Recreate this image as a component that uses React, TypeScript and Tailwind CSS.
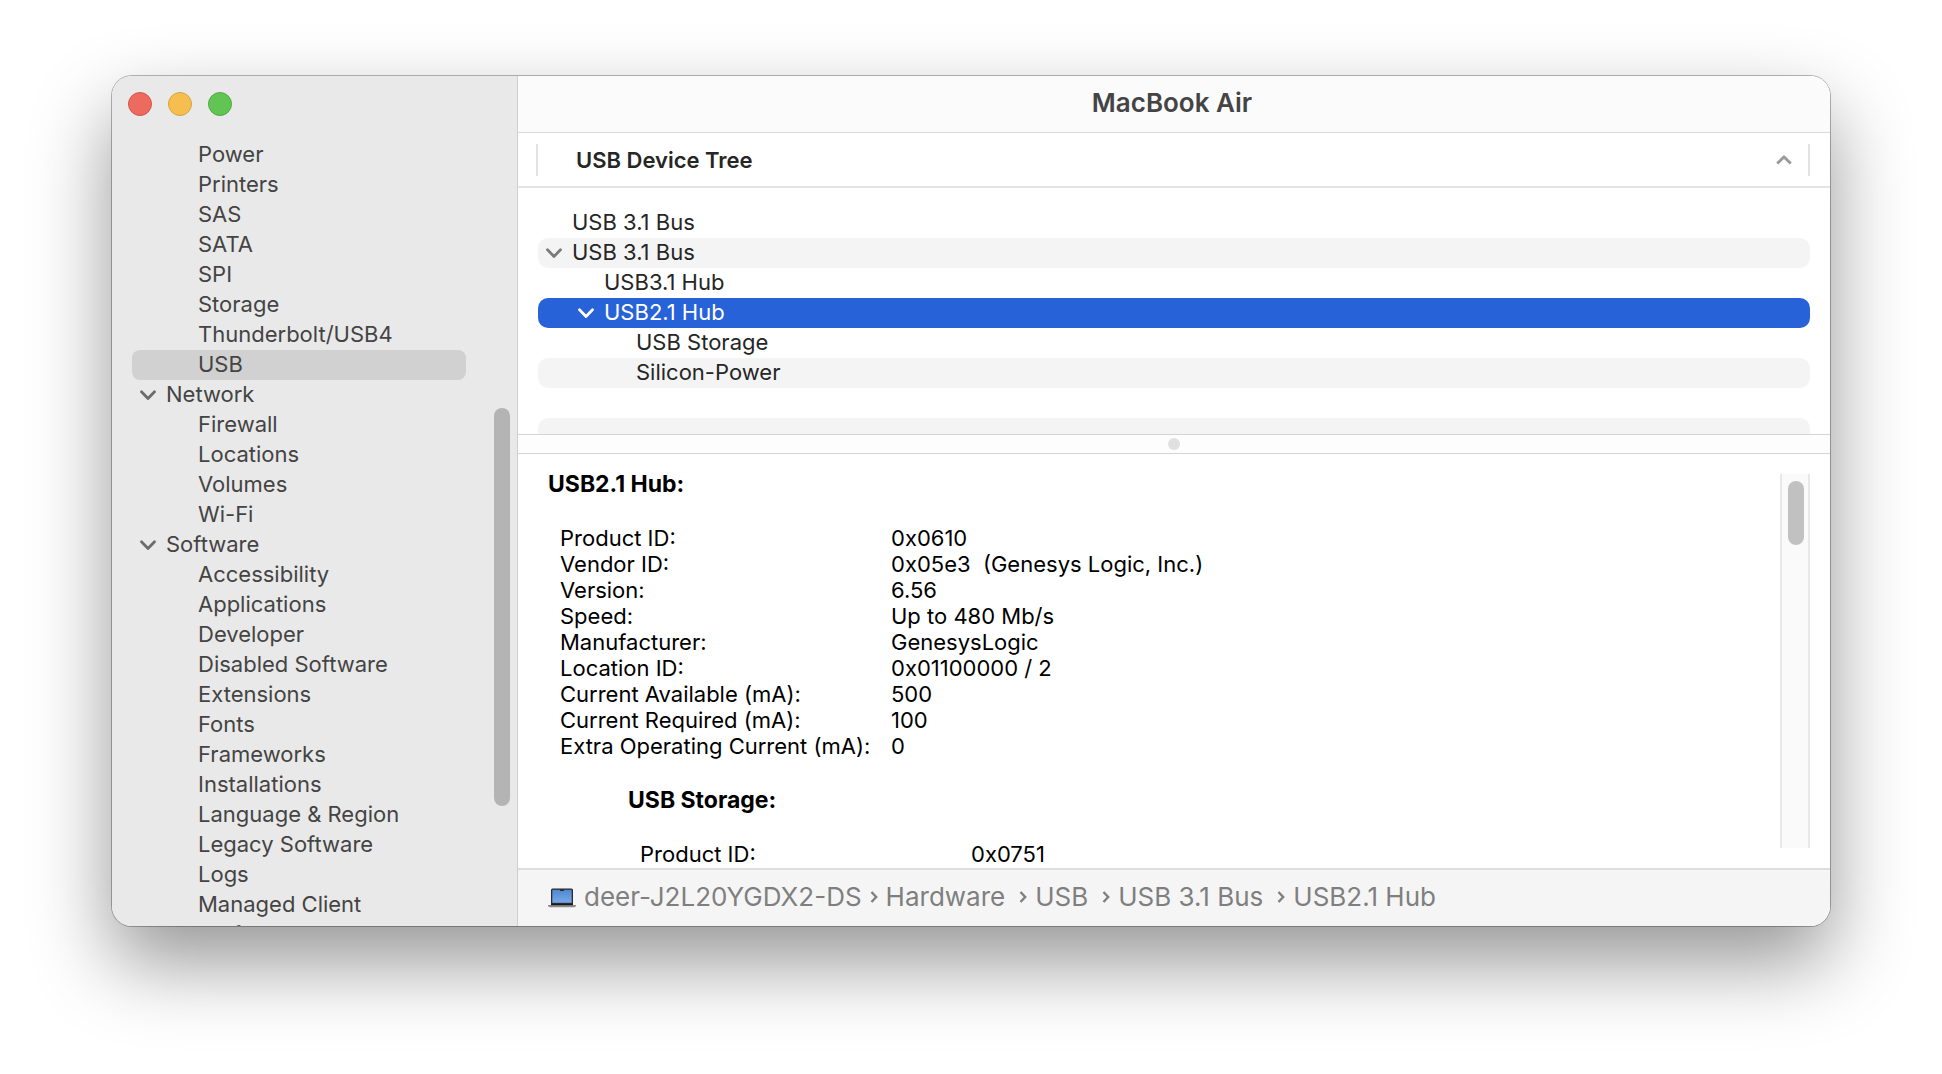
import React from 'react';

type Section = { name?: string; items: string[] };

const sections: Section[] = [
  {
    items: ['Parallel SCSI', 'Power', 'Printers', 'SAS', 'SATA', 'SPI', 'Storage', 'Thunderbolt/USB4', 'USB'],
  },
  {
    name: 'Network',
    items: ['Firewall', 'Locations', 'Volumes', 'Wi-Fi'],
  },
  {
    name: 'Software',
    items: [
      'Accessibility',
      'Applications',
      'Developer',
      'Disabled Software',
      'Extensions',
      'Fonts',
      'Frameworks',
      'Installations',
      'Language & Region',
      'Legacy Software',
      'Logs',
      'Managed Client',
      'Preference Panes',
    ],
  },
];

const tree = [
  { label: 'USB 3.1 Bus', indent: 'pl-2', open: false },
  { label: 'USB 3.1 Bus', indent: 'pl-2', open: true },
  { label: 'USB3.1 Hub', indent: 'pl-10', open: false },
  { label: 'USB2.1 Hub', indent: 'pl-10', open: true, selected: true },
  { label: 'USB Storage', indent: 'pl-[72px]', open: false },
  { label: 'Silicon-Power', indent: 'pl-[72px]', open: false },
  { label: '', indent: 'pl-2', open: false },
  { label: '', indent: 'pl-2', open: false },
];

const hubDetails = [
  ['Product ID:', '0x0610'],
  ['Vendor ID:', '0x05e3  (Genesys Logic, Inc.)'],
  ['Version:', '6.56'],
  ['Speed:', 'Up to 480 Mb/s'],
  ['Manufacturer:', 'GenesysLogic'],
  ['Location ID:', '0x01100000 / 2'],
  ['Current Available (mA):', '500'],
  ['Current Required (mA):', '100'],
  ['Extra Operating Current (mA):', '0'],
];

const storageDetails = [['Product ID:', '0x0751']];

const crumbs = ['deer-J2L20YGDX2-DS', 'Hardware', 'USB', 'USB 3.1 Bus', 'USB2.1 Hub'];

const Chevron: React.FC<{ className?: string }> = ({ className = '' }) => (
  <svg viewBox="0 0 16 10" className={`w-4 h-2.5 shrink-0 overflow-visible ${className}`} fill="none" stroke="currentColor" strokeWidth="2.8" strokeLinecap="round" strokeLinejoin="round" aria-hidden="true">
    <path d="M1.5 2.8 8 9.4l6.5-6.6" />
  </svg>
);

const Laptop: React.FC = () => (
  <svg viewBox="0 0 28 20" className="w-7 h-5 shrink-0" aria-hidden="true">
    <defs>
      <linearGradient id="screen" x1="0" y1="0" x2="0" y2="1">
        <stop offset="0" stopColor="#4f88d0" />
        <stop offset="1" stopColor="#78a9ea" />
      </linearGradient>
    </defs>
    <rect x="3" y="0.5" width="22" height="17" rx="1.5" fill="#2b2b2d" />
    <rect x="4.3" y="1.8" width="19.4" height="13" fill="url(#screen)" />
    <rect x="12" y="1.5" width="4" height="1.6" rx="0.5" fill="#2b2b2d" />
    <path d="M0 17h28v.6c0 1-1 1.6-2 1.6H2c-1 0-2-.6-2-1.6z" fill="#8c8c8e" />
    <rect x="3" y="16" width="22" height="1.2" fill="#19191b" />
  </svg>
);

const Sidebar: React.FC = () => (
  <aside className="relative flex flex-col w-[406px] shrink-0 bg-[#e9e9e9] border-r border-[#cfcfcf] text-[#444444]">
    <div className="flex gap-4 px-4 pt-4 h-14 shrink-0">
      <button aria-label="Close" className="size-6 rounded-full bg-[#ec6a5e] border border-[#d0584e]" />
      <button aria-label="Minimize" className="size-6 rounded-full bg-[#f5bf4f] border border-[#d8a243]" />
      <button aria-label="Zoom" className="size-6 rounded-full bg-[#61c554] border border-[#52a843]" />
    </div>
    <nav className="flex-1 min-h-0 overflow-hidden pl-5 pr-[51px]">
      <div className="-mt-[22px]">
        {sections.map((section, i) => (
          <div key={i}>
            {section.name && (
              <button className="flex w-full h-[30px] items-center gap-2.5 pl-2 pb-0.5">
                <Chevron className="text-[#6b6b6b]" />
                {section.name}
              </button>
            )}
            {section.items.map((item) => (
              <button
                key={item}
                className={`flex w-full h-[30px] items-center rounded-lg pl-[66px] pb-0.5 ${item === 'USB' ? 'bg-[#d1d1d1]' : ''}`}
              >
                {item}
              </button>
            ))}
          </div>
        ))}
      </div>
    </nav>
    <div className="absolute right-[7px] top-[332px] h-[398px] w-4 rounded-full bg-[#b4b4b4]" />
  </aside>
);

const DeviceTree: React.FC = () => (
  <section className="shrink-0">
    <header className="flex h-[55px] items-center border-b-2 border-[#e4e4e4] pl-[18px] pr-5">
      <button className="flex flex-1 h-8 items-center justify-between border-x-2 border-[#e2e2e2] pl-[38px] pr-4 font-semibold text-[#262626]">
        USB Device Tree
        <svg viewBox="0 0 16 10" className="w-4 h-2.5" fill="none" stroke="#999999" strokeWidth="2.8" aria-hidden="true">
          <path d="M1.2 8.6 8 2l6.8 6.6" />
        </svg>
      </button>
    </header>
    <div className="h-[246px] overflow-hidden px-5 pt-5 text-[#262626]">
      {tree.map((row, i) => (
        <button
          key={i}
          aria-label={row.label || 'Empty row'}
          className={`flex w-full h-[30px] items-center gap-2.5 rounded-[10px] pb-0.5 ${row.indent} ${
            row.selected ? 'bg-[#2862d9] text-white' : i % 2 ? 'bg-[#f4f4f4]' : ''
          }`}
        >
          {row.open ? <Chevron className={row.selected ? 'text-white' : 'text-[#7b7b7b]'} /> : <span className="w-4" />}
          {row.label}
        </button>
      ))}
    </div>
  </section>
);

const Details: React.FC<{ title: string; rows: string[][] }> = ({ title, rows }) => (
  <div className="pb-7">
    <h2 className="text-[23px] font-bold pb-7">{title}</h2>
    <table className="ml-3">
      <tbody>
        {rows.map(([label, value]) => (
          <tr key={label}>
            <th scope="row" className="w-[331px] p-0 text-left font-normal whitespace-nowrap">{label}</th>
            <td className="p-0 whitespace-pre">{value}</td>
          </tr>
        ))}
      </tbody>
    </table>
  </div>
);

const App: React.FC = () => {
  return (
    <div className="flex h-screen bg-white px-28 pt-[76px] pb-[148px] font-['Inter',sans-serif] text-[22px] leading-[26px]">
      <div className="flex flex-1 min-w-0 overflow-hidden rounded-[20px] shadow-[0_0_0_1px_rgba(0,0,0,0.28),0_36px_80px_rgba(0,0,0,0.42)]">
        <Sidebar />
        <main className="flex flex-1 min-w-0 flex-col bg-white">
          <h1 className="flex h-[57px] shrink-0 items-center justify-center border-b border-[#d9d9d9] bg-[#fbfbfb] pb-0.5 pr-1 text-[26px] font-semibold text-[#444444]">
            MacBook Air
          </h1>
          <DeviceTree />
          <div className="flex h-5 shrink-0 items-center justify-center border-y border-[#d4d4d4] bg-[#fdfdfd]">
            <span className="size-3 rounded-full bg-[#e0e0e0]" />
          </div>
          <section className="flex flex-1 min-h-0 pr-5 text-black">
            <div className="flex-1 overflow-hidden pl-[30px] pt-[17px]">
              <Details title="USB2.1 Hub:" rows={hubDetails} />
              <div className="pl-20">
                <Details title="USB Storage:" rows={storageDetails} />
              </div>
            </div>
            <div className="mt-5 mb-5 w-[30px] border-x-2 border-[#e8e8e8] bg-[#fafafa] px-[6px] pt-[7px]">
              <div className="h-16 w-4 rounded-full bg-[#c1c1c1]" />
            </div>
          </section>
          <footer className="flex h-[58px] shrink-0 items-center border-t-2 border-[#dddddd] bg-[#f5f5f5] pl-[30px] text-[26px] text-[#7f7f7f]">
            <Laptop />
            <nav className="flex items-center pl-2 pb-0.5">
              {crumbs.map((crumb, i) => (
                <React.Fragment key={crumb}>
                  {i > 0 && (
                    <svg viewBox="0 0 8 12" className={`w-2 h-3 mr-2 ${i === 1 ? 'ml-2' : 'ml-3.5'}`} fill="none" stroke="currentColor" strokeWidth="2.4" aria-hidden="true">
                      <path d="m1.5 1 4.7 5-4.7 5" />
                    </svg>
                  )}
                  <a href="#">{crumb}</a>
                </React.Fragment>
              ))}
            </nav>
          </footer>
        </main>
      </div>
    </div>
  );
};

export default App;
